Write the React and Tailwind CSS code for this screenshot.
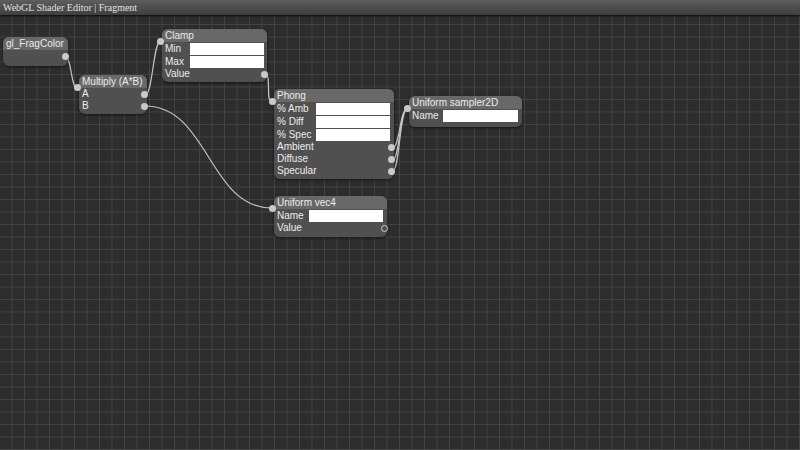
import React from 'react';

// node graph data, page coordinates
const nodes = [
  { id: 'frag', x: 3, y: 37, w: 65, h: 29, title: 'gl_FragColor', rows: [{ label: '', out: true }] },
  {
    id: 'mul', x: 79, y: 75, w: 68, h: 39, title: 'Multiply (A*B)', input: true,
    rows: [{ label: 'A', out: true }, { label: 'B', out: true }],
  },
  {
    id: 'clamp', x: 162, y: 29, w: 105, h: 53, title: 'Clamp', input: true, boxAt: 28, boxW: 74,
    rows: [{ label: 'Min', box: true }, { label: 'Max', box: true }, { label: 'Value', out: true }],
  },
  {
    id: 'phong', x: 274, y: 89, w: 120, h: 90, title: 'Phong', input: true, boxAt: 42, boxW: 74,
    rows: [
      { label: '% Amb', box: true },
      { label: '% Diff', box: true },
      { label: '% Spec', box: true },
      { label: 'Ambient', out: true },
      { label: 'Diffuse', out: true },
      { label: 'Specular', out: true },
    ],
  },
  {
    id: 'sampler', x: 409, y: 96, w: 113, h: 31, title: 'Uniform sampler2D', input: true, boxAt: 34, boxW: 75,
    rows: [{ label: 'Name', box: true }],
  },
  {
    id: 'vec4', x: 274, y: 196, w: 113, h: 41, title: 'Uniform vec4', input: true, boxAt: 35, boxW: 74,
    rows: [{ label: 'Name', box: true }, { label: 'Value', out: true, hollow: true }],
  },
];

const links = [
  [65.5, 57, 77, 88],
  [145, 95, 161, 40.5],
  [145, 106, 272, 208],
  [265.5, 74.5, 271.5, 101.5],
  [392.5, 148, 407, 109],
  [392.5, 160, 407, 109],
  [392.5, 171, 407, 109],
];

const curve = ([x1, y1, x2, y2]) => {
  const d = Math.max(Math.abs(x2 - x1) / 2, 6);
  return `M${x1} ${y1} C${x1 + d} ${y1} ${x2 - d} ${y2} ${x2} ${y2}`;
};

const Port = ({ className, hollow }) => (
  <span
    className={
      'absolute w-[7px] h-[7px] rounded-full ' +
      (hollow ? 'border border-[#d0d0d0] bg-[#4f4f4f] ' : 'bg-[#c9c9c9] ') +
      className
    }
  />
);

const Node = ({ node }) => (
  <div
    className="absolute rounded-[6px] bg-[#505050] shadow-[0_1px_3px_rgba(0,0,0,0.6)] text-[10px] leading-none text-[#ececec]"
    style={{ left: node.x, top: node.y, width: node.w, height: node.h }}
  >
    <div className="h-[13px] rounded-t-[6px] bg-[#686868] px-[3px] flex items-center">{node.title}</div>
    {node.input && <Port className="left-[-5px] top-[9px]" />}
    {node.rows.map((r, i) => (
      <div key={i} className={'relative flex items-center px-[3px] ' + (r.box ? 'h-[13px]' : 'h-[12px]')}>
        <span className="shrink-0" style={r.box ? { width: node.boxAt - 3 } : undefined}>{r.label}</span>
        {r.box && <span className="block h-[12px] bg-white" style={{ width: node.boxW }} />}
        {r.out && <Port hollow={r.hollow} className="right-[-1px] top-[2.5px]" />}
      </div>
    ))}
  </div>
);

export default function App() {
  return (
    <div className="relative w-[800px] h-[450px] overflow-hidden flex flex-col bg-[#2d2d2d] font-['Liberation_Sans',Arial,sans-serif]">
      <div className="h-[15px] shrink-0 bg-gradient-to-b from-[#5e5e5e] to-[#3e3e3e] shadow-[0_1px_2px_rgba(0,0,0,0.8)] z-10 px-[3px] flex items-center font-['Liberation_Serif','Times_New_Roman',serif] text-[10px] leading-none text-[#e2e2e2]">
        WebGL Shader Editor | Fragment
      </div>
      <div className="flex-1 bg-[#2d2d2d] bg-[linear-gradient(to_right,#434343_1px,transparent_1px),linear-gradient(to_bottom,#434343_1px,transparent_1px)] bg-[size:12.5px_12.5px] bg-[position:11.5px_9px]" />

      <svg className="absolute inset-0 pointer-events-none" width="800" height="450">
        {links.map((l, i) => (
          <path key={i} d={curve(l)} fill="none" stroke="#c4c4c4" strokeWidth="1.2" />
        ))}
      </svg>

      {nodes.map((n) => (
        <Node key={n.id} node={n} />
      ))}
    </div>
  );
}
